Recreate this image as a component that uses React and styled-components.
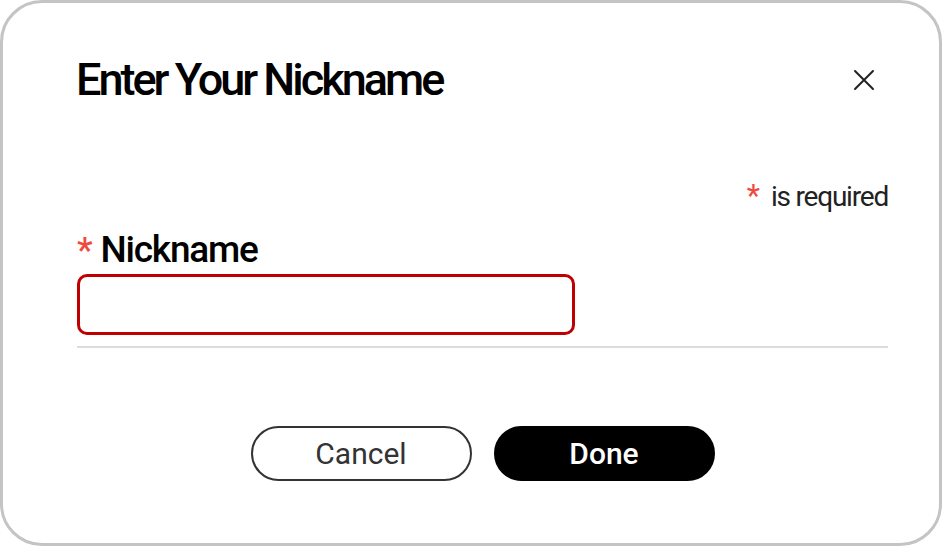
import * as React from "react"
import styled, { createGlobalStyle } from "styled-components"

const GlobalStyle = createGlobalStyle`
  * { box-sizing: border-box; }
  html, body {
    margin: 0;
    background: #fff;
    font-family: Roboto, "Liberation Sans", sans-serif;
  }
`

const Dialog = styled.div`
  width: 942px;
  height: 546px;
  border: 3px solid #c4c4c4;
  border-radius: 42px;
  background: #fff;
  padding: 50px 51px 0 74px;
  display: flex;
  flex-direction: column;
`

const Header = styled.div`
  display: flex;
  align-items: center;
  justify-content: space-between;
`

const Title = styled.h1`
  margin: 0 0 0 -1px;
  font-size: 45px;
  line-height: 54px;
  font-weight: 500;
  letter-spacing: -3px;
  color: #000;
`

const CloseButton = styled.button`
  width: 24px;
  height: 24px;
  margin-right: 12px;
  padding: 0;
  border: 0;
  background: none;
  color: #222;
  display: flex;
  align-items: center;
  justify-content: center;
  cursor: pointer;
`

const RequiredNote = styled.div`
  margin-top: 74px;
  align-self: flex-end;
  font-size: 28px;
  line-height: 30px;
  letter-spacing: -1.2px;
  color: #222;
`

const Star = styled.span`
  color: #f04a3e;
  font-size: ${(p) => p.size || 1.1}em;
  margin-right: ${(p) => p.gap || 12}px;
`

const Label = styled.label`
  margin-top: 17px;
  display: block;
  font-size: 37px;
  line-height: 42px;
  font-weight: 500;
  letter-spacing: -1.2px;
  color: #000;
`

const Input = styled.input`
  display: block;
  margin-top: 3px;
  width: 498px;
  height: 61px;
  border: 3px solid #c00000;
  border-radius: 10px;
  outline: none;
  font: inherit;
  font-size: 24px;
  padding: 0 14px;
`

const Divider = styled.hr`
  margin: 11px 0 0;
  border: 0;
  border-top: 2px solid #dcdcdc;
`

const Actions = styled.div`
  margin-top: 78px;
  display: flex;
  justify-content: center;
  gap: 22px;
`

const PillButton = styled.button`
  width: 221px;
  height: 55px;
  border-radius: 28px;
  font-family: Roboto, "Liberation Sans", sans-serif;
  font-size: 30px;
  cursor: pointer;
  border: 2px solid ${(p) => (p.primary ? "#000" : "#333")};
  background: ${(p) => (p.primary ? "#000" : "#fff")};
  color: ${(p) => (p.primary ? "#fff" : "#333")};
  font-weight: ${(p) => (p.primary ? 500 : 400)};
`

export default function App() {
  return (
    <Dialog>
      <GlobalStyle />
      <Header>
        <Title>Enter Your Nickname</Title>
        <CloseButton aria-label="Close">
          <svg width="22" height="22" viewBox="0 0 22 22">
            <path d="M2 2L20 20M20 2L2 20" stroke="currentColor" strokeWidth="2" strokeLinecap="round" />
          </svg>
        </CloseButton>
      </Header>
      <RequiredNote>
        <Star>*</Star>is required
      </RequiredNote>
      <Label htmlFor="nickname">
        <Star size={0.95} gap={9}>*</Star>Nickname
      </Label>
      <Input id="nickname" />
      <Divider />
      <Actions>
        <PillButton>Cancel</PillButton>
        <PillButton primary>Done</PillButton>
      </Actions>
    </Dialog>
  )
}
